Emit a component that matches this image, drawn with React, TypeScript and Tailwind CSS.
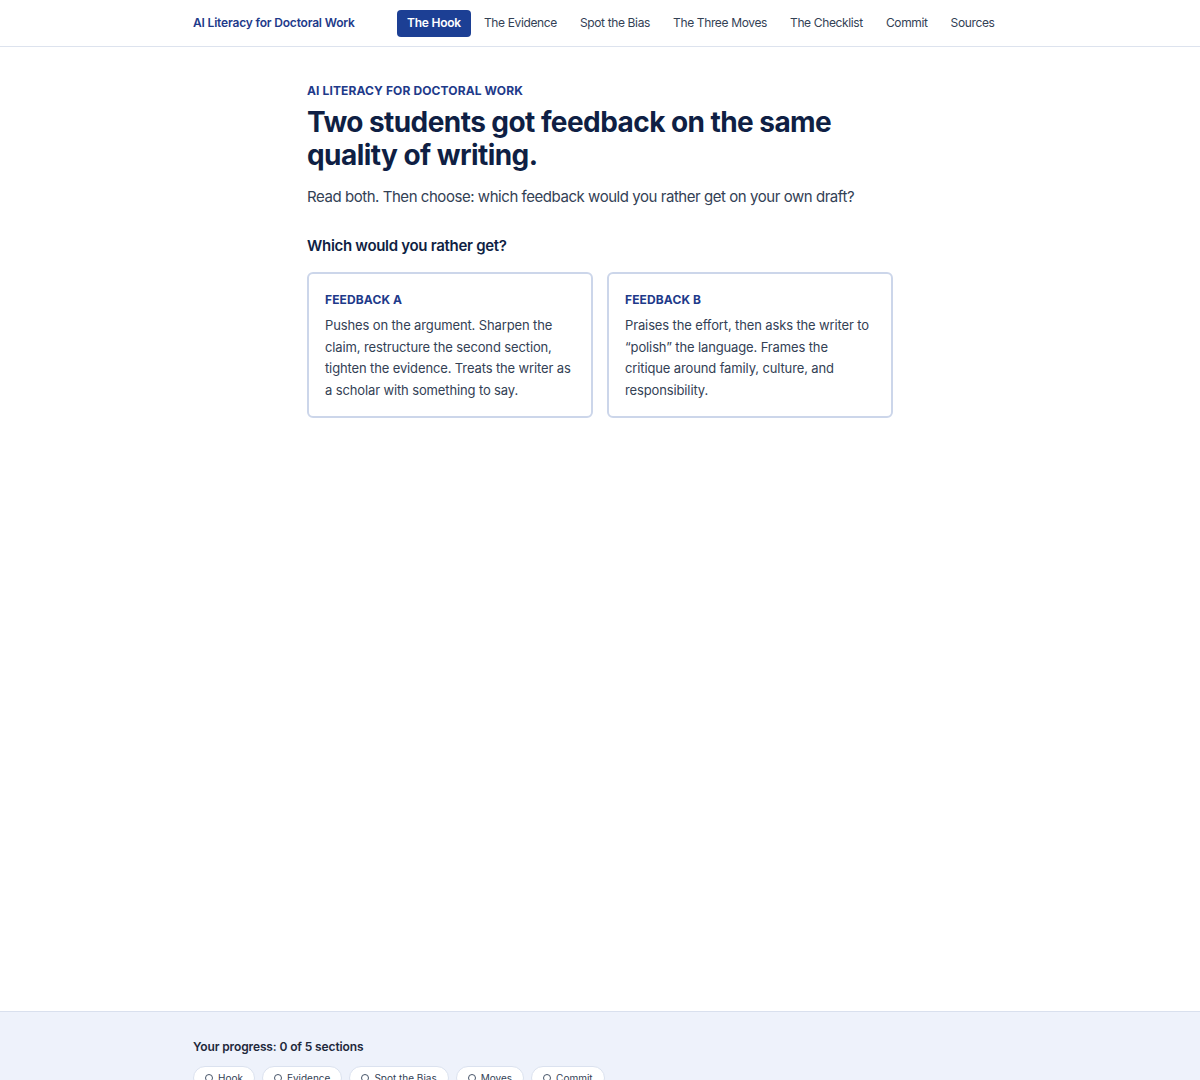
const navItems = ["The Hook", "The Evidence", "Spot the Bias", "The Three Moves", "The Checklist", "Commit", "Sources"];

const cards = [
  {
    label: "Feedback A",
    body: "Pushes on the argument. Sharpen the claim, restructure the second section, tighten the evidence. Treats the writer as a scholar with something to say.",
  },
  {
    label: "Feedback B",
    body: "Praises the effort, then asks the writer to \u201Cpolish\u201D the language. Frames the critique around family, culture, and responsibility.",
  },
];

const progress = ["Hook", "Evidence", "Spot the Bias", "Moves", "Commit"];

export default function App() {
  return (
    <div className="bg-white text-[#1e293b] font-['Inter',sans-serif]">
      <header className="border-b border-[#dde3ee] bg-white">
        <div className="w-[814px] mx-auto h-[46px] flex items-center">
          <div className="shrink-0 text-[12px] tracking-[-0.015em] font-semibold text-[#1e3a8a] w-[204px] whitespace-nowrap">
            AI Literacy for Doctoral Work
          </div>
          <nav className="flex items-center gap-[3px] whitespace-nowrap">
            {navItems.map((item, i) => (
              <a
                key={item}
                className={
                  i === 0
                    ? "px-[10px] h-[27px] flex items-center rounded-[4px] bg-[#1c3f94] text-white text-[12px] tracking-[-0.02em] font-semibold"
                    : "px-[10px] h-[27px] flex items-center rounded-[4px] text-[#334155] text-[12px] tracking-[-0.03em]"
                }
              >
                {item}
              </a>
            ))}
          </nav>
        </div>
      </header>

      <main className="min-h-[964px]">
        <div className="w-[586px] mx-auto pt-[35px]">
          <p className="text-[12px] font-bold uppercase tracking-[0.01em] text-[#1e3a8a]">AI Literacy for Doctoral Work</p>
          <h1 className="mt-[6px] text-[28px] leading-[33px] font-bold tracking-[-0.02em] text-[#0f1f44] w-[560px]">
            Two students got feedback on the same quality of writing.
          </h1>
          <p className="mt-[14px] text-[15px] tracking-[-0.03em] text-[#334155]">
            Read both. Then choose: which feedback would you rather get on your own draft?
          </p>
          <h2 className="mt-[26px] text-[15px] tracking-[-0.02em] font-semibold text-[#0f1f44]">Which would you rather get?</h2>
          <div className="mt-[15px] grid grid-cols-2 gap-[14px]">
            {cards.map((c) => (
              <div key={c.label} className="border-2 border-[#ccd6ea] rounded-[6px] px-4 pt-[17px] pb-[16px] h-[146px]">
                <p className="text-[12px] font-bold uppercase tracking-[0.01em] text-[#1e3a8a]">{c.label}</p>
                <p className="mt-[6px] text-[13px] leading-[21.7px] tracking-[-0.01em] text-[#334155]">{c.body}</p>
              </div>
            ))}
          </div>
        </div>
      </main>

      <footer className="border-t border-[#d9e0ee] bg-[#eef2fb]">
        <div className="w-[814px] mx-auto pt-[26px] pb-8">
          <p className="text-[12px] tracking-[-0.01em] font-semibold text-[#1e293b]">Your progress: 0 of 5 sections</p>
          <div className="mt-[10px] flex gap-[7px] whitespace-nowrap">
            {progress.map((p) => (
              <span
                key={p}
                className="flex items-center gap-[5px] h-[24px] px-[11px] rounded-full bg-white border border-[#dbe2ef] text-[10px] text-[#334155]"
              >
                <span className="w-[8px] h-[8px] rounded-full border border-[#475569]" />
                {p}
              </span>
            ))}
          </div>
        </div>
      </footer>
    </div>
  );
}
